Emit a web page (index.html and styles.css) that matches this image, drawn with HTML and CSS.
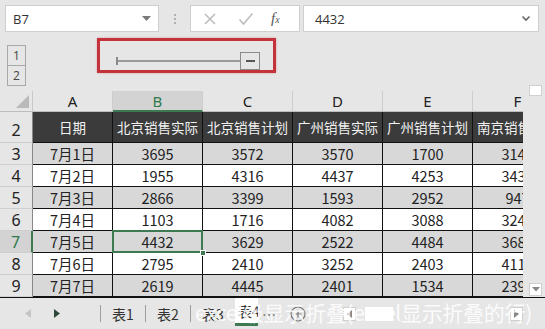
FILE: index.html
```html
<!DOCTYPE html>
<html>
<head>
<meta charset="utf-8">
<link rel="stylesheet" href="styles.css">
</head>
<body>
<div class="app">
  <div class="topbar">
    <div class="namebox">
      <span class="nbtext">B7</span>
      <svg class="dd" width="9" height="6" viewBox="0 0 9 6"><path d="M0 0H9L4.5 5Z" fill="#7a7a7a"/></svg>
    </div>
    <div class="dots"><i></i><i></i><i></i></div>
    <div class="fxbox">
      <svg class="ico" width="14" height="14" viewBox="0 0 14 14"><path d="M2 2L12 12M12 2L2 12" stroke="#bdbdbd" stroke-width="1.6" fill="none"/></svg>
      <svg class="ico" width="16" height="14" viewBox="0 0 16 14"><path d="M1.5 7.5L5.5 12L14.5 1.5" stroke="#bdbdbd" stroke-width="1.6" fill="none"/></svg>
      <span class="fx">f<span class="fxx">x</span></span>
    </div>
    <div class="formula">
      <span class="ftext">4432</span>
      <svg width="10" height="7" viewBox="0 0 10 7"><path d="M1.5 1.5L5 5L8.5 1.5" stroke="#666" stroke-width="1.6" fill="none"/></svg>
    </div>
  </div>

  <div class="outline">
    <div class="levels">
      <div class="lvl">1</div>
      <div class="lvl">2</div>
    </div>
    <div class="redbox">
      <span class="tick"></span>
      <span class="oline"></span>
      <span class="minus"><i></i></span>
    </div>
  </div>

  <div class="sheet">
    <div class="gridwrap">
      <div class="grid">
        <div class="corner"><svg width="13" height="13" viewBox="0 0 13 13"><path d="M13 0V13H0Z" fill="#b9b9b9"/></svg></div>
        <div class="ch">A</div>
        <div class="ch sel">B</div>
        <div class="ch">C</div>
        <div class="ch">D</div>
        <div class="ch">E</div>
        <div class="ch">F</div>

        <div class="rh rh2">2</div>
        <div class="c dk">日期</div>
        <div class="c dk">北京销售实际</div>
        <div class="c dk">北京销售计划</div>
        <div class="c dk">广州销售实际</div>
        <div class="c dk">广州销售计划</div>
        <div class="c dk">南京销售实际</div>

        <div class="rh">3</div>
        <div class="c g">7月1日</div><div class="c g">3695</div><div class="c g">3572</div><div class="c g">3570</div><div class="c g">1700</div><div class="c g">3145</div>

        <div class="rh">4</div>
        <div class="c">7月2日</div><div class="c">1955</div><div class="c">4316</div><div class="c">4437</div><div class="c">4253</div><div class="c">3432</div>

        <div class="rh">5</div>
        <div class="c g">7月3日</div><div class="c g">2866</div><div class="c g">3399</div><div class="c g">1593</div><div class="c g">2952</div><div class="c g">947</div>

        <div class="rh">6</div>
        <div class="c">7月4日</div><div class="c">1103</div><div class="c">1716</div><div class="c">4082</div><div class="c">3088</div><div class="c">3241</div>

        <div class="rh selr">7</div>
        <div class="c g">7月5日</div><div class="c g active">4432<span class="handle"></span></div><div class="c g">3629</div><div class="c g">2522</div><div class="c g">4484</div><div class="c g">3685</div>

        <div class="rh">8</div>
        <div class="c">7月6日</div><div class="c">2795</div><div class="c">2410</div><div class="c">3252</div><div class="c">2403</div><div class="c">4113</div>

        <div class="rh">9</div>
        <div class="c g">7月7日</div><div class="c g">2619</div><div class="c g">4445</div><div class="c g">2401</div><div class="c g">1534</div><div class="c g">2398</div>
      </div>
    </div>
    <div class="vscroll">
      <div class="vthumb"></div>
      <div class="vdown"><svg width="8" height="5" viewBox="0 0 8 5"><path d="M0 0H8L4 4.5Z" fill="#888"/></svg></div>
    </div>
  </div>

  <div class="tabs">
    <div class="nav">
      <svg width="6" height="9" viewBox="0 0 6 9"><path d="M6 0V9L0 4.5Z" fill="#c4c4c4"/></svg>
      <svg width="6" height="9" viewBox="0 0 6 9"><path d="M0 0V9L6 4.5Z" fill="#2f4a3a"/></svg>
    </div>
    <span class="sep"></span>
    <div class="tab">表1</div>
    <span class="sep"></span>
    <div class="tab">表2</div>
    <span class="sep"></span>
    <div class="tab">表3</div>
    <div class="tab active">表4</div>
    <div class="more">…</div>
    <div class="plus"><svg width="16" height="16" viewBox="0 0 16 16"><circle cx="8" cy="8" r="7" stroke="#777" stroke-width="1.2" fill="none"/><path d="M8 4.5V11.5M4.5 8H11.5" stroke="#777" stroke-width="1.2"/></svg></div>
    <div class="hscroll">
      <div class="harrow"><svg width="5" height="8" viewBox="0 0 5 8"><path d="M5 0V8L0 4Z" fill="#888"/></svg></div>
      <div class="hthumb"></div>
      <div class="hspace"></div>
      <div class="harrow"><svg width="5" height="8" viewBox="0 0 5 8"><path d="M0 0V8L5 4Z" fill="#888"/></svg></div>
    </div>
  </div>

  <div class="watermark">excel级显示折叠(excel显示折叠的行)</div>
</div>
</body>
</html>
```

FILE: styles.css
```css
* { box-sizing: border-box; }
html, body { margin: 0; padding: 0; }
body {
  width: 545px;
  height: 329px;
  overflow: hidden;
  background: #e6e6e6;
  font-family: "Noto Sans CJK SC", "Noto Sans", sans-serif;
  color: #222;
}
.app {
  position: relative;
  width: 545px;
  height: 329px;
  overflow: hidden;
  display: flex;
  flex-direction: column;
}

/* top formula bar */
.topbar {
  height: 36px;
  display: flex;
  align-items: center;
  padding: 1px 6px 0 5px;
}
.namebox {
  width: 154px;
  height: 27px;
  background: #fff;
  border: 1px solid #cfcfcf;
  display: flex;
  align-items: center;
  justify-content: space-between;
  padding: 0 7px 0 7px;
}
.nbtext { font-family: "Open Sans", "Noto Sans", sans-serif; font-size: 13px; color: #333; }
.dots {
  width: 31px;
  display: flex;
  flex-direction: column;
  align-items: center;
  gap: 2px;
}
.dots i { width: 2px; height: 2px; background: #b0b0b0; display: block; }
.fxbox {
  width: 110px;
  height: 27px;
  background: #fff;
  border: 1px solid #cfcfcf;
  display: flex;
  align-items: center;
  padding-left: 12px;
  gap: 21px;
}
.fx {
  font-family: "Liberation Serif", serif;
  font-style: italic;
  font-size: 15px;
  color: #555;
  margin-left: -4px;
}
.fxx { font-size: 10px; }
.formula {
  flex: 1;
  margin-left: 3px;
  height: 27px;
  background: #fff;
  border: 1px solid #cfcfcf;
  display: flex;
  align-items: center;
  justify-content: space-between;
  padding: 0 7px 0 11px;
}
.ftext { font-family: "Open Sans", "Noto Sans", sans-serif; font-size: 13px; color: #333; }

/* outline band */
.outline {
  height: 55px;
  display: flex;
  align-items: flex-start;
}
.levels {
  margin: 9px 0 0 7px;
  display: flex;
  flex-direction: column;
}
.lvl {
  width: 19px;
  height: 21px;
  border: 1px solid #a8a8a8;
  background: #e6e6e6;
  font-family: "Open Sans", "Noto Sans", sans-serif;
  font-size: 12px;
  color: #444;
  display: flex;
  align-items: center;
  justify-content: center;
}
.lvl + .lvl { margin-top: -1px; }
.redbox {
  margin: 2px 0 0 71px;
  width: 179px;
  height: 35px;
  border: 3px solid #c4323b;
  box-shadow: 0 0 2px rgba(196, 50, 59, 0.4);
  display: flex;
  align-items: flex-start;
  padding: 7px 0 0 16px;
}
.tick {
  width: 2px;
  height: 8px;
  margin-top: 9px;
  background: #8a8a8a;
}
.oline {
  width: 122px;
  height: 2px;
  margin-top: 12px;
  background: #9a9a9a;
}
.minus {
  width: 20px;
  height: 18px;
  border: 1px solid #8a8a8a;
  display: flex;
  align-items: center;
  justify-content: center;
  margin-top: 4px;
}
.minus i { display: block; width: 9px; height: 2px; background: #555; }

/* sheet */
.sheet {
  height: 206px;
  display: flex;
}
.gridwrap {
  width: 523px;
  overflow: hidden;
}
.grid {
  display: grid;
  grid-template-columns: 33px 80px 90px 90px 90px 90px 90px;
  grid-template-rows: 21px 31px repeat(7, 22px);
  width: 563px;
}
.corner {
  display: flex;
  align-items: flex-end;
  justify-content: flex-end;
  padding: 0 3px 3px 0;
  border-right: 1px solid #c8c8c8;
  border-bottom: 1px solid #bdbdbd;
}
.ch {
  display: flex;
  align-items: center;
  justify-content: center;
  font-family: "Noto Sans", sans-serif;
  font-size: 15px;
  color: #222;
  border-right: 1px solid #cdcdcd;
  border-bottom: 1px solid #bdbdbd;
}
.ch.sel {
  background: #d3d3d3;
  color: #2f7a4c;
  border-bottom: 2px solid #3d7a52;
}
.rh {
  display: flex;
  align-items: center;
  justify-content: center;
  font-family: "Noto Sans", sans-serif;
  font-size: 16px;
  color: #222;
  border-right: 1px solid #888;
  border-bottom: 1px solid #cfcfcf;
}
.rh2 { align-items: flex-end; padding-bottom: 1px; }
.rh.selr {
  background: #d3d3d3;
  color: #2f7a4c;
  border-right: 2px solid #3d7a52;
}
.c {
  display: flex;
  align-items: center;
  justify-content: center;
  font-size: 14.5px;
  color: #222;
  background: #fff;
  border-right: 1px solid #111;
  border-bottom: 1px solid #111;
  white-space: nowrap;
  overflow: hidden;
}
.c.dk {
  background: #3b3b3b;
  color: #f2f2f2;
  font-size: 13.5px;
  border-right: 1px solid #111;
}
.c.g { background: #d8d8d8; }
.c.active { position: relative; overflow: visible; }
.c.active::after {
  content: "";
  position: absolute;
  left: -1px;
  top: -1px;
  right: -1px;
  bottom: -1px;
  border: 2px solid #3d7a52;
  pointer-events: none;
}
.handle {
  position: absolute;
  right: -4px;
  bottom: -4px;
  width: 6px;
  height: 6px;
  background: #3d7a52;
  border: 1px solid #fff;
  z-index: 2;
}

.vscroll {
  width: 22px;
  display: flex;
  flex-direction: column;
  align-items: center;
  padding-left: 3px;
}
.vthumb {
  width: 13px;
  height: 11px;
  margin-top: -6px;
  background: #fff;
  border: 1px solid #d0d0d0;
}
.vdown {
  margin-top: auto;
  margin-bottom: 1px;
  width: 13px;
  height: 13px;
  background: #fff;
  border: 1px solid #d0d0d0;
  display: flex;
  align-items: center;
  justify-content: center;
}

/* tabs */
.tabs {
  height: 32px;
  display: flex;
  align-items: center;
  border-top: 1px solid #111;
  font-size: 14px;
  color: #333;
}
.nav {
  width: 100px;
  display: flex;
  align-items: center;
  padding-left: 25px;
  gap: 23px;
}
.sep {
  width: 1px;
  height: 17px;
  background: #9e9e9e;
}
.tab {
  width: 44px;
  text-align: center;
  white-space: nowrap;
  overflow: hidden;
}
.tab.active {
  width: 23px;
  height: 28px;
  align-self: flex-start;
  background: #fff;
  border-bottom: 3px solid #3d7a52;
  display: flex;
  align-items: center;
  justify-content: flex-start;
  padding-left: 3px;
}
.more { width: 22px; text-align: center; color: #666; }
.plus { width: 36px; display: flex; justify-content: center; }
.hscroll {
  flex: 1;
  display: flex;
  align-items: center;
  padding: 0 22px 0 27px;
  gap: 0;
}
.harrow {
  width: 13px;
  height: 14px;
  background: #fff;
  border: 1px solid #d0d0d0;
  display: flex;
  align-items: center;
  justify-content: center;
}
.hthumb {
  width: 28px;
  height: 14px;
  margin-left: 9px;
  background: #fff;
}
.hspace { flex: 1; }

.watermark {
  position: absolute;
  left: 195px;
  top: 298px;
  font-size: 21px;
  line-height: 28px;
  color: rgba(255, 255, 255, 0.85);
  white-space: nowrap;
  letter-spacing: -0.3px;
}
```
